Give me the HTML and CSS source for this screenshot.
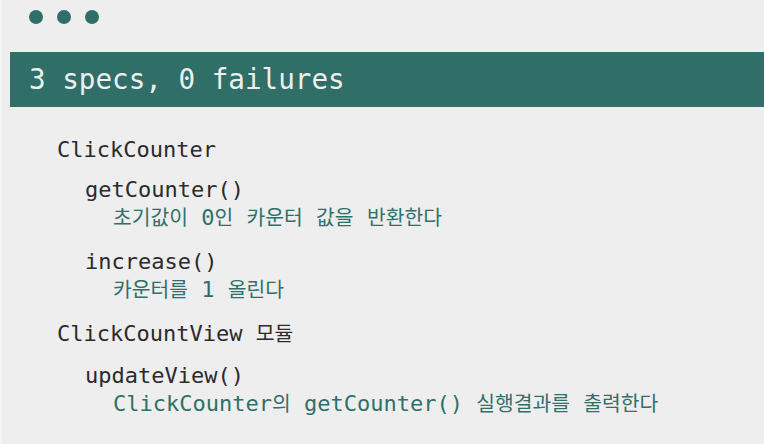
FILE: index.html
```html
<!DOCTYPE html>
<html lang="ko">
<head>
<meta charset="utf-8">
<title>Jasmine Spec Runner</title>
<link rel="stylesheet" href="styles.css">
</head>
<body>
<div class="page">
  <div class="dots">
    <span class="dot"></span><span class="dot"></span><span class="dot"></span>
  </div>
  <div class="bar">3 specs, 0 failures</div>
  <div class="results">
    <div class="suite">
      <div class="suite-title">ClickCounter</div>
      <div class="spec">
        <div class="spec-name">getCounter()</div>
        <div class="spec-desc"><span class="ko">초기값이</span> 0<span class="ko">인</span> <span class="ko">카운터</span> <span class="ko">값을</span> <span class="ko">반환한다</span></div>
      </div>
      <div class="spec">
        <div class="spec-name">increase()</div>
        <div class="spec-desc"><span class="ko">카운터를</span> 1 <span class="ko">올린다</span></div>
      </div>
    </div>
    <div class="suite">
      <div class="suite-title">ClickCountView <span class="ko">모듈</span></div>
      <div class="spec">
        <div class="spec-name">updateView()</div>
        <div class="spec-desc">ClickCounter<span class="ko">의</span> getCounter() <span class="ko">실행결과를</span> <span class="ko">출력한다</span></div>
      </div>
    </div>
  </div>
</div>
</body>
</html>
```
FILE: styles.css
```css
html, body {
  margin: 0;
  padding: 0;
  background: #eeeeee;
}
.page {
  font-family: "DejaVu Sans Mono", "Noto Sans CJK KR", monospace;
  color: #2b2b2b;
  border-left: 2px solid #f4f4f4;
  min-height: 444px;
  box-sizing: border-box;
}
.dots {
  display: flex;
  gap: 14px;
  padding: 10px 0 0 27px;
  height: 14px;
}
.dot {
  width: 14px;
  height: 14px;
  border-radius: 50%;
  background: #2f6f68;
}
.bar {
  margin: 28px 0 0 8px;
  height: 55px;
  line-height: 55px;
  padding-left: 19px;
  background: #2f6f68;
  color: #eeeeee;
  font-size: 27.6px;
  white-space: nowrap;
}
.results {
  padding: 29px 0 0 55px;
  font-size: 22px;
}
.suite + .suite {
  margin-top: 16px;
}
.suite-title {
  line-height: 28px;
  height: 28px;
  margin-bottom: 12px;
  white-space: nowrap;
}
.suite + .suite .suite-title {
  margin-bottom: 14px;
}
.spec {
  padding-left: 28px;
}
.spec + .spec {
  margin-top: 16px;
}
.spec-name {
  line-height: 28px;
  height: 28px;
}
.spec-desc {
  padding-left: 28px;
  line-height: 28px;
  height: 28px;
  color: #2f7168;
  white-space: nowrap;
}
.ko {
  font-size: 20.4px;
}
```
